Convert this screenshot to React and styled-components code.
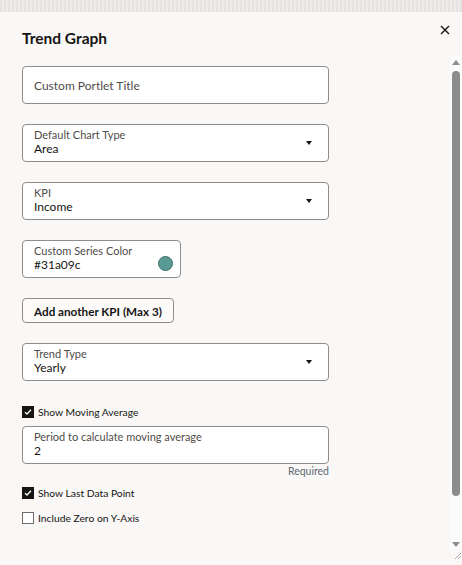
import React from 'react';
import styled, { createGlobalStyle } from 'styled-components';

const GlobalStyle = createGlobalStyle`
  html, body {
    margin: 0;
    padding: 0;
    background: #ebe9e6;
  }
  body {
    font-family: Lato, "Noto Sans", sans-serif;
    color: #161513;
  }
`;

const App = () => {
  return (
    <>
      <GlobalStyle />
      <Page>
        <TopStrip />
        <Dialog>
          <Header>
            <Title>Trend Graph</Title>
            <CloseButton aria-label="Close">
              <svg width="10" height="10" viewBox="0 0 10 10">
                <path d="M1 1L9 9M9 1L1 9" stroke="#161513" strokeWidth="1.4" />
              </svg>
            </CloseButton>
          </Header>
          <Body>
            <Content>
              <Field>
                <Placeholder>Custom Portlet Title</Placeholder>
              </Field>

              <Field>
                <FieldText>
                  <Label>Default Chart Type</Label>
                  <Value>Area</Value>
                </FieldText>
                <Caret />
              </Field>

              <Field>
                <FieldText>
                  <Label>KPI</Label>
                  <Value>Income</Value>
                </FieldText>
                <Caret />
              </Field>

              <Field width="159px">
                <FieldText>
                  <Label>Custom Series Color</Label>
                  <Value>#31a09c</Value>
                </FieldText>
                <Swatch color="#5a9a95" />
              </Field>

              <Button>Add another KPI (Max 3)</Button>

              <Field>
                <FieldText>
                  <Label>Trend Type</Label>
                  <Value>Yearly</Value>
                </FieldText>
                <Caret />
              </Field>

              <Group>
                <CheckRow>
                  <Checkbox checked />
                  <CheckLabel>Show Moving Average</CheckLabel>
                </CheckRow>
                <Field>
                  <FieldText>
                    <Label>Period to calculate moving average</Label>
                    <Value>2</Value>
                  </FieldText>
                </Field>
                <Hint>Required</Hint>
              </Group>

              <Checks>
                <CheckRow>
                  <Checkbox checked />
                  <CheckLabel>Show Last Data Point</CheckLabel>
                </CheckRow>
                <CheckRow>
                  <Checkbox />
                  <CheckLabel>Include Zero on Y-Axis</CheckLabel>
                </CheckRow>
              </Checks>
            </Content>
            <Gutter>
              <Scrollbar>
                <ScrollArrow />
                <Thumb />
                <ScrollArrow down />
              </Scrollbar>
              <Grip>
                <svg width="7" height="7" viewBox="0 0 7 7">
                  <path d="M7 1L1 7M7 4L4 7" stroke="#9a9a9a" strokeWidth="0.8" />
                </svg>
              </Grip>
            </Gutter>
          </Body>
        </Dialog>
      </Page>
    </>
  );
};

const Checkbox = ({ checked }) => (
  <Box checked={checked}>
    {checked && (
      <svg width="8" height="8" viewBox="0 0 8 8">
        <path d="M1 4.2L3 6L7 1.8" fill="none" stroke="#fff" strokeWidth="1.3" />
      </svg>
    )}
  </Box>
);

const Page = styled.div`
  width: 462px;
  height: 565px;
  display: flex;
  flex-direction: column;
  overflow: hidden;
`;

const TopStrip = styled.div`
  height: 12px;
  background: repeating-linear-gradient(90deg, #e6e4e1 0 2px, #eeecea 2px 4px);
`;

const Dialog = styled.div`
  flex: 1;
  background: #f9f8f6;
  display: flex;
  flex-direction: column;
`;

const Header = styled.div`
  display: flex;
  justify-content: space-between;
  align-items: center;
  padding: 17px 12px 0 22px;
  height: 18px;
`;

const Title = styled.h1`
  margin: 0;
  font-size: 15.5px;
  font-weight: 700;
  color: #161513;
`;

const CloseButton = styled.button`
  border: none;
  background: transparent;
  padding: 0;
  width: 10px;
  height: 10px;
  display: flex;
  margin-top: -17px;
  cursor: pointer;
`;

const Body = styled.div`
  flex: 1;
  display: flex;
  margin-top: 9px;
`;

const Content = styled.div`
  flex: 1;
  padding: 10px 0 0 22px;
  display: flex;
  flex-direction: column;
  align-items: flex-start;
  gap: 20px;
`;

const Field = styled.div`
  box-sizing: border-box;
  width: ${(p) => p.width || '307px'};
  height: 38px;
  background: #fff;
  border: 1px solid #8f8d8b;
  border-radius: 4px;
  display: flex;
  align-items: center;
  padding: 0 12px 0 11px;
`;

const FieldText = styled.div`
  flex: 1;
  display: flex;
  flex-direction: column;
  padding-bottom: 3px;
`;

const Placeholder = styled.span`
  font-size: 12px;
  color: #4f4c49;
`;

const Label = styled.span`
  font-size: 11px;
  line-height: 13px;
  color: #4f4c49;
`;

const Value = styled.span`
  font-size: 12px;
  line-height: 15px;
  color: #161513;
`;

const Caret = styled.span`
  width: 0;
  height: 0;
  border-left: 3.5px solid transparent;
  border-right: 3.5px solid transparent;
  border-top: 4px solid #161513;
  margin-right: 4px;
`;

const Swatch = styled.span`
  width: 13px;
  height: 13px;
  border-radius: 50%;
  background: ${(p) => p.color};
  border: 1px solid #3f6e6a;
  margin-top: 8px;
  margin-right: -5px;
`;

const Button = styled.button`
  height: 25px;
  padding: 0 11px;
  background: #fcfbfa;
  border: 1px solid #8f8d8b;
  border-radius: 4px;
  font-family: inherit;
  font-size: 11.7px;
  font-weight: 700;
  color: #161513;
  cursor: pointer;
`;

const Group = styled.div`
  display: flex;
  flex-direction: column;
  align-items: flex-end;
  width: 307px;
  margin-top: 4px;

  & > :first-child {
    align-self: flex-start;
    margin-bottom: 7px;
  }
`;

const Hint = styled.span`
  font-size: 10.5px;
  color: #5e6a74;
  margin-top: 1px;
`;

const Checks = styled.div`
  display: flex;
  flex-direction: column;
  gap: 11px;
  margin-top: -11px;
`;

const CheckRow = styled.label`
  display: flex;
  align-items: center;
  gap: 4px;
  height: 14px;
`;

const Box = styled.span`
  box-sizing: border-box;
  width: 12px;
  height: 12px;
  display: flex;
  align-items: center;
  justify-content: center;
  background: ${(p) => (p.checked ? '#161513' : '#fff')};
  border: 1px solid ${(p) => (p.checked ? '#161513' : '#6f6c69')};
`;

const CheckLabel = styled.span`
  font-size: 10.3px;
  color: #161513;
`;

const Gutter = styled.div`
  width: 12px;
  display: flex;
  flex-direction: column;
  align-items: center;
`;

const Scrollbar = styled.div`
  width: 12px;
  height: 494px;
  background: #fbfbfb;
  display: flex;
  flex-direction: column;
  align-items: center;
  padding: 4px 0 3px;
  box-sizing: border-box;
  gap: 6px;
`;

const ScrollArrow = styled.span`
  width: 0;
  height: 0;
  border-left: 4px solid transparent;
  border-right: 4px solid transparent;
  ${(p) =>
    p.down
      ? 'border-top: 5px solid #8c8c8c; margin-top: auto;'
      : 'border-bottom: 5px solid #8c8c8c;'}
`;

const Thumb = styled.span`
  width: 8px;
  height: 425px;
  background: #8c8c8c;
  border-radius: 4px;
`;

const Grip = styled.span`
  display: flex;
  margin-top: 2px;
  margin-left: 3px;
`;

export default App;
